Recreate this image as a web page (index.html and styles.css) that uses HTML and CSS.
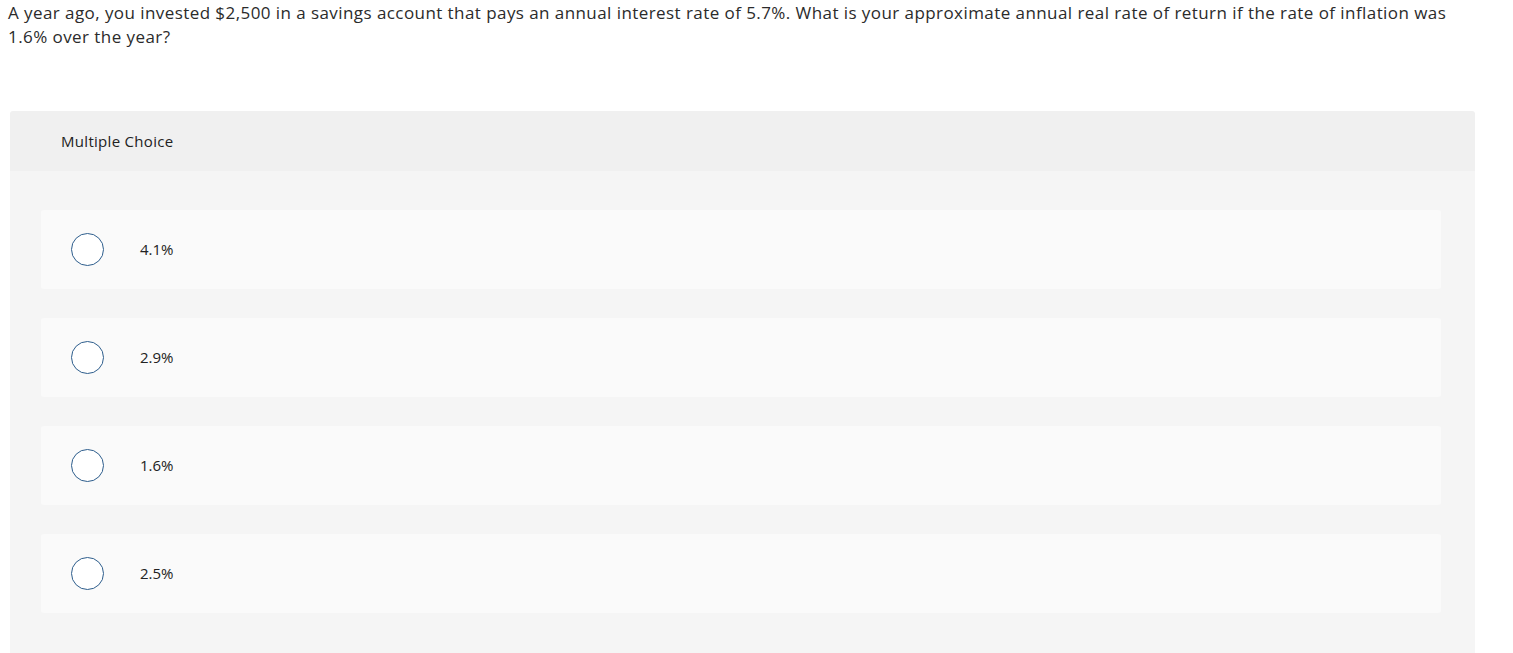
FILE: index.html
```html
<!DOCTYPE html>
<html>
<head>
<meta charset="utf-8">
<link rel="stylesheet" href="styles.css">
</head>
<body>
<p class="question">A year ago, you invested $2,500 in a savings account that pays an annual interest rate of 5.7%. What is your approximate annual real rate of return if the rate of inflation was 1.6% over the year?</p>
<div class="panel">
  <div class="panel-head">Multiple Choice</div>
  <div class="panel-body">
    <div class="option"><span class="radio"></span><span class="label">4.1%</span></div>
    <div class="option"><span class="radio"></span><span class="label">2.9%</span></div>
    <div class="option"><span class="radio"></span><span class="label">1.6%</span></div>
    <div class="option"><span class="radio"></span><span class="label">2.5%</span></div>
  </div>
</div>
</body>
</html>
```
FILE: styles.css
```css
body {
  margin: 0;
  padding: 0 8px;
  background: #ffffff;
  font-family: "Open Sans", "Liberation Sans", sans-serif;
  color: #2b2b2b;
}
.question {
  margin: 0;
  padding-top: 1px;
  font-size: 17px;
  letter-spacing: 0.43px;
  line-height: 24px;
  width: 1460px;
}
.panel {
  margin: 62px 0 0 2px;
  width: 1465px;
  border-radius: 3px 3px 0 0;
  overflow: hidden;
}
.panel-head {
  height: 60px;
  background: #f0f0f0;
  display: flex;
  align-items: center;
  padding-left: 51px;
  font-size: 15px;
  letter-spacing: 0.3px;
  color: #222;
}
.panel-body {
  background: #f5f5f5;
  padding: 39px 34px 40px 31px;
  display: flex;
  flex-direction: column;
  gap: 29px;
}
.option {
  height: 79px;
  background: #fafafa;
  border-radius: 3px;
  display: flex;
  align-items: center;
  padding-left: 30px;
}
.radio {
  width: 31px;
  height: 31px;
  border: 1.5px solid #2d5d8c;
  border-radius: 50%;
  background: #fff;
  flex: none;
}
.label {
  margin-left: 36px;
  margin-top: -2px;
  font-size: 15px;
  color: #222;
}
```
